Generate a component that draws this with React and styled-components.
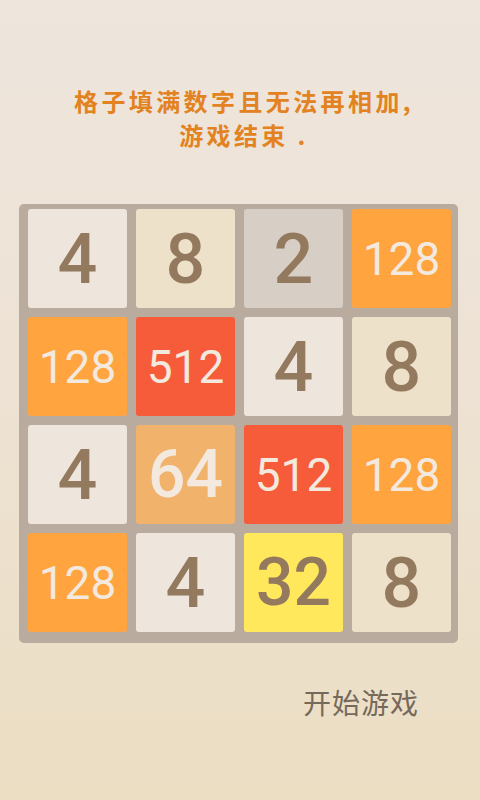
import styled, { createGlobalStyle } from 'styled-components';

const GlobalStyle = createGlobalStyle`
  html, body {
    margin: 0;
    padding: 0;
  }
  body {
    font-family: "Noto Sans", "Noto Sans CJK SC", sans-serif;
  }
`

const Screen = styled.div`
  width: 480px;
  height: 800px;
  overflow: hidden;
  background: linear-gradient(180deg, #eee5dd 0%, #ede2d3 50%, #ecdec3 100%);
  display: flex;
  flex-direction: column;
`

const Message = styled.div`
  margin: 84px 0 0 0;
  padding-left: 8px;
  height: 120px;
  text-align: center;
  color: #e28220;
  font-family: "Noto Sans CJK SC", sans-serif;
  font-weight: 700;
  font-size: 24px;
  line-height: 34px;
  letter-spacing: 3.4px;
`

const Board = styled.div`
  margin-left: 19px;
  width: 439px;
  box-sizing: border-box;
  padding: 5px 7px 11px 9px;
  background: #b9ab9e;
  border-radius: 5px;
  display: grid;
  grid-template-columns: repeat(4, 99px);
  grid-auto-rows: 99px;
  column-gap: 9px;
  row-gap: 9px;
`

const palette = {
  2: ['#d7cec5', '#937a5f'],
  4: ['#eee5dd', '#937a5f'],
  8: ['#ede1c9', '#937a5f'],
  32: ['#ffe85c', '#937a5f'],
  64: ['#f1b26c', '#f3e9df'],
  128: ['#ffa43e', '#f3e9df'],
  512: ['#f65c39', '#f3e9df'],
}

const sizeFor = (v) => (v >= 100 ? '46px' : v >= 10 ? '66px' : '70px')

const Tile = styled.div`
  border-radius: 3px;
  background: ${(p) => palette[p.value][0]};
  color: ${(p) => palette[p.value][1]};
  display: flex;
  align-items: center;
  justify-content: center;
  font-family: "Roboto", "Noto Sans", sans-serif;
  font-size: ${(p) => sizeFor(p.value)};
  font-weight: ${(p) => (p.value >= 100 ? 400 : 500)};
  line-height: 1;
`

const Footer = styled.div`
  display: flex;
  justify-content: flex-end;
  padding: 39px 61px 0 0;
`

const StartButton = styled.button`
  border: none;
  background: none;
  padding: 0;
  color: #75695b;
  font-family: "Noto Sans CJK SC", sans-serif;
  font-size: 28px;
  letter-spacing: 1px;
  cursor: pointer;
`

const grid = [
  [4, 8, 2, 128],
  [128, 512, 4, 8],
  [4, 64, 512, 128],
  [128, 4, 32, 8],
]

function App() {
  return (
    <Screen>
      <GlobalStyle />
      <Message>
        格子填满数字且无法再相加,
        <br />
        游戏结束 .
      </Message>
      <Board>
        {grid.flat().map((v, i) => (
          <Tile key={i} value={v}>{v}</Tile>
        ))}
      </Board>
      <Footer>
        <StartButton>开始游戏</StartButton>
      </Footer>
    </Screen>
  );
}

export default App;
